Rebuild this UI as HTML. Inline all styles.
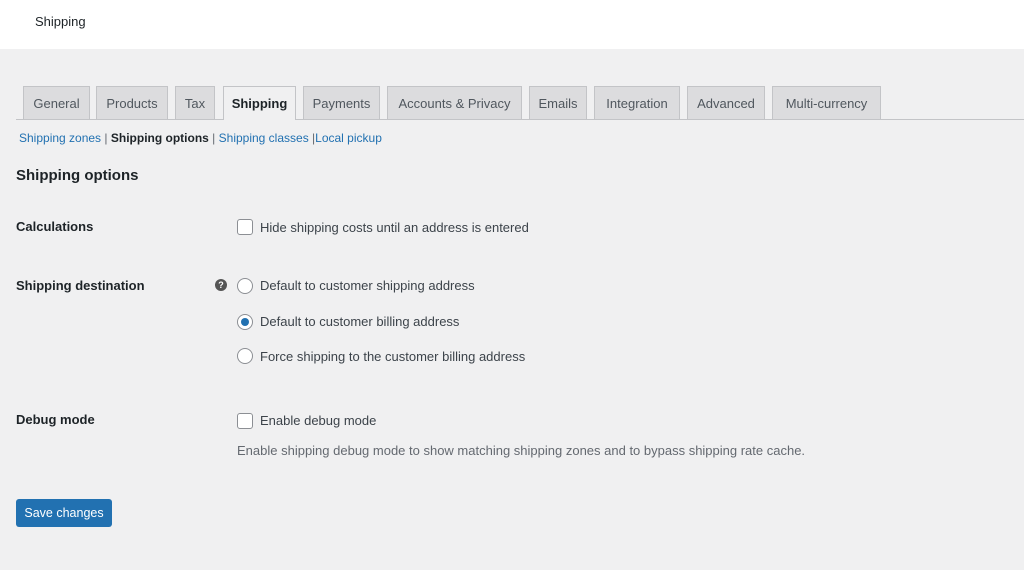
<!DOCTYPE html>
<html><head><style>
body{margin:0;width:1024px;height:570px;background:#f0f0f1;font-family:"Liberation Sans",sans-serif;color:#3c434a;font-size:13px;position:relative;overflow:hidden}
.a{position:absolute;white-space:nowrap}
.top{position:absolute;left:0;top:0;width:1024px;height:49px;background:#fff}
.tab{position:absolute;top:86px;height:33px;line-height:33px;background:#dcdcde;border:1px solid #c3c4c7;border-bottom:none;text-align:center;font-size:13px;color:#50575e;box-sizing:border-box}
.tab.on{background:#f0f0f1;color:#1d2327;font-weight:bold;height:34px}
.line{position:absolute;left:16px;top:119px;width:1008px;height:1px;background:#c3c4c7}
a{color:#2271b1;text-decoration:none}
.lbl{font-weight:bold;color:#1d2327;font-size:13px}
.cb{position:absolute;width:14px;height:14px;border:1px solid #8c8f94;border-radius:3px;background:#fff}
.rd{position:absolute;width:14px;height:14px;border:1px solid #8c8f94;border-radius:50%;background:#fff}
</style></head><body>
<div class="top"></div>
<div class="a" style="left:35px;top:14px;font-size:13px;color:#1d2327">Shipping</div>
<div class="line"></div>
<div class="tab" style="left:23px;width:67px">General</div>
<div class="tab" style="left:96px;width:72px">Products</div>
<div class="tab" style="left:175px;width:40px">Tax</div>
<div class="tab on" style="left:223px;width:73px">Shipping</div>
<div class="tab" style="left:303px;width:77px">Payments</div>
<div class="tab" style="left:387px;width:135px">Accounts &amp; Privacy</div>
<div class="tab" style="left:529px;width:58px">Emails</div>
<div class="tab" style="left:594px;width:86px">Integration</div>
<div class="tab" style="left:687px;width:78px">Advanced</div>
<div class="tab" style="left:772px;width:109px">Multi-currency</div>
<div class="a" style="left:19px;top:131px;color:#646970;font-size:12px"><a>Shipping zones</a> | <b style="color:#1d2327">Shipping options</b> | <a>Shipping classes</a> |<a>Local pickup</a></div>
<div class="a" style="left:16px;top:167px;font-size:15px;font-weight:bold;color:#1d2327">Shipping options</div>
<div class="a lbl" style="left:16px;top:219px">Calculations</div>
<div class="cb" style="left:237px;top:219px"></div>
<div class="a" style="left:260px;top:220px">Hide shipping costs until an address is entered</div>
<div class="a lbl" style="left:16px;top:278px">Shipping destination</div>
<div class="a" style="left:215px;top:279px;width:12px;height:12px;border-radius:50%;background:#555;color:#fff;font-size:9px;font-weight:bold;text-align:center;line-height:12px">?</div>
<div class="rd" style="left:237px;top:278px"></div>
<div class="a" style="left:260px;top:278px">Default to customer shipping address</div>
<div class="rd" style="left:237px;top:314px"><div style="position:absolute;left:3px;top:3px;width:8px;height:8px;border-radius:50%;background:#2271b1"></div></div>
<div class="a" style="left:260px;top:314px">Default to customer billing address</div>
<div class="rd" style="left:237px;top:348px"></div>
<div class="a" style="left:260px;top:349px">Force shipping to the customer billing address</div>
<div class="a lbl" style="left:16px;top:412px">Debug mode</div>
<div class="cb" style="left:237px;top:413px"></div>
<div class="a" style="left:260px;top:413px">Enable debug mode</div>
<div class="a" style="left:237px;top:443px;color:#646970">Enable shipping debug mode to show matching shipping zones and to bypass shipping rate cache.</div>
<div class="a" style="left:16px;top:499px;width:96px;height:28px;background:#2271b1;border-radius:3px;color:#fff;text-align:center;line-height:28px;font-size:12.5px">Save changes</div>
</body></html>
